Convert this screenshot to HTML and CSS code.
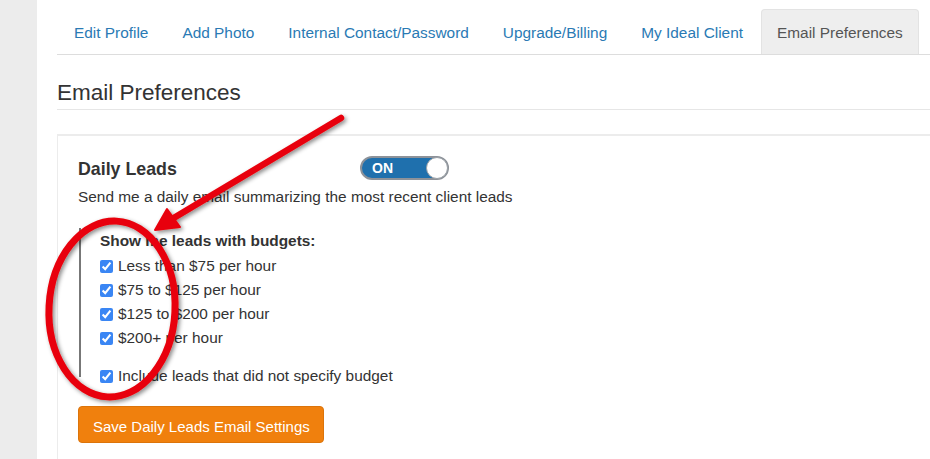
FILE: index.html
```html
<!DOCTYPE html>
<html>
<head>
<meta charset="utf-8">
<link rel="stylesheet" href="styles.css">
</head>
<body>
<div class="layout">
  <aside class="sidebar"></aside>
  <main class="main">
    <ul class="tabs">
      <li class="tab"><a href="#">Edit Profile</a></li>
      <li class="tab"><a href="#">Add Photo</a></li>
      <li class="tab"><a href="#">Internal Contact/Password</a></li>
      <li class="tab"><a href="#">Upgrade/Billing</a></li>
      <li class="tab"><a href="#">My Ideal Client</a></li>
      <li class="tab active"><a href="#">Email Preferences</a></li>
    </ul>
    <h1 class="page-header">Email Preferences</h1>
    <section class="panel">
      <div class="title-row">
        <h2 class="title">Daily Leads</h2>
        <div class="toggle"><span class="toggle-label">ON</span><span class="knob"></span></div>
      </div>
      <p class="desc">Send me a daily email summarizing the most recent client leads</p>
      <div class="budgets">
        <div class="budgets-head">Show me leads with budgets:</div>
        <label class="check"><input type="checkbox" checked><span>Less than $75 per hour</span></label>
        <label class="check"><input type="checkbox" checked><span>$75 to $125 per hour</span></label>
        <label class="check"><input type="checkbox" checked><span>$125 to $200 per hour</span></label>
        <label class="check"><input type="checkbox" checked><span>$200+ per hour</span></label>
        <label class="check check-extra"><input type="checkbox" checked><span>Include leads that did not specify budget</span></label>
      </div>
      <button class="btn-save">Save Daily Leads Email Settings</button>
    </section>
  </main>
</div>
<svg class="annotation" width="930" height="459" viewBox="0 0 930 459">
  <defs>
    <filter id="sh" x="-20%" y="-20%" width="140%" height="140%">
      <feDropShadow dx="2" dy="2" stdDeviation="2" flood-color="#000" flood-opacity="0.45"/>
    </filter>
  </defs>
  <g filter="url(#sh)" fill="none" stroke="#e8000a" stroke-linecap="round">
    <ellipse cx="112" cy="309" rx="63" ry="88" stroke-width="7" transform="rotate(3 112 309)"/>
    <line x1="341" y1="118" x2="172" y2="219" stroke-width="6.5"/>
    <polygon points="155,230 167,209 180,227" fill="#e8000a" stroke="#e8000a" stroke-width="2" stroke-linejoin="round"/>
  </g>
</svg>
</body>
</html>
```
FILE: styles.css
```css
html, body {
  margin: 0;
  padding: 0;
  background: #fff;
  overflow: hidden;
}
body {
  font-family: "Liberation Sans", Arial, sans-serif;
  font-size: 15.4px;
  color: #333;
  position: relative;
  width: 930px;
  height: 459px;
}
.layout {
  display: flex;
  width: 960px;
  height: 459px;
}
.sidebar {
  width: 37px;
  flex: none;
  background: #ececec;
}
.main {
  padding: 9px 0 0 20px;
  width: 880px;
  flex: none;
}
.tabs {
  list-style: none;
  margin: 0;
  padding: 0 0 0 1px;
  display: flex;
  border-bottom: 1px solid #ddd;
}
.tab {
  margin-right: 2px;
}
.tab a {
  display: block;
  padding: 11px 15px 9px;
  line-height: 23px;
  border: 1px solid transparent;
  border-bottom: 0;
  border-radius: 4px 4px 0 0;
  color: #2a7ab4;
  text-decoration: none;
  box-sizing: border-box;
  height: 45px;
}
.tab.active a {
  background: #eee;
  border-color: #e3e3e3;
  color: #555;
}
.page-header {
  margin: 26px 0 24px;
  padding-bottom: 4px;
  font-size: 22.5px;
  line-height: 24px;
  font-weight: normal;
  color: #333;
  border-bottom: 1px solid #e6e6e6;
}
.panel {
  border-top: 2px solid #ececec;
  border-left: 1px solid #ececec;
  padding: 20px 0 30px 20px;
  height: 400px;
}
.title-row {
  display: flex;
  align-items: flex-start;
}
.title {
  width: 282px;
  margin: 0;
  padding-top: 1px;
  font-size: 17.8px;
  line-height: 24px;
  font-weight: bold;
  color: #333;
}
.toggle {
  position: relative;
  width: 89px;
  height: 24px;
  box-sizing: border-box;
  border-radius: 12px;
  background: #1f70ad;
  border: 2px solid #8d9299;
  display: flex;
  align-items: center;
}
.toggle-label {
  color: #fff;
  font-weight: bold;
  font-size: 14px;
  padding-left: 10px;
  line-height: 20px;
}
.knob {
  position: absolute;
  right: -1px;
  top: -1px;
  width: 20px;
  height: 20px;
  border-radius: 50%;
  background: #fff;
  border: 1px solid #9aa0a6;
}
.desc {
  margin: 5px 0 0;
  line-height: 21px;
}
.budgets {
  margin-top: 21px;
  margin-left: 1px;
  border-left: 2px solid #777;
  padding: 2px 0 0 19px;
  display: flex;
  flex-direction: column;
}
.budgets-head {
  font-weight: bold;
  line-height: 21px;
  margin-bottom: 2px;
}
.check {
  display: flex;
  align-items: center;
  height: 24px;
  line-height: 24px;
}
.check input {
  margin: 2px 5px 0 0;
  width: 13px;
  height: 13px;
  accent-color: #3a86f4;
}
.check span {
  padding-top: 1px;
}
.check-extra {
  margin-top: 14px;
  margin-bottom: -10px;
}
.btn-save {
  margin-top: 29px;
  font-family: inherit;
  font-size: 15px;
  line-height: 19px;
  padding: 10px 13px 6px 14px;
  color: #fff;
  background: #f0800d;
  border: 1px solid #dc740a;
  border-radius: 4px;
  white-space: nowrap;
  height: 37px;
  text-align: center;
}
.annotation {
  position: absolute;
  left: 0;
  top: 0;
  pointer-events: none;
}
```
